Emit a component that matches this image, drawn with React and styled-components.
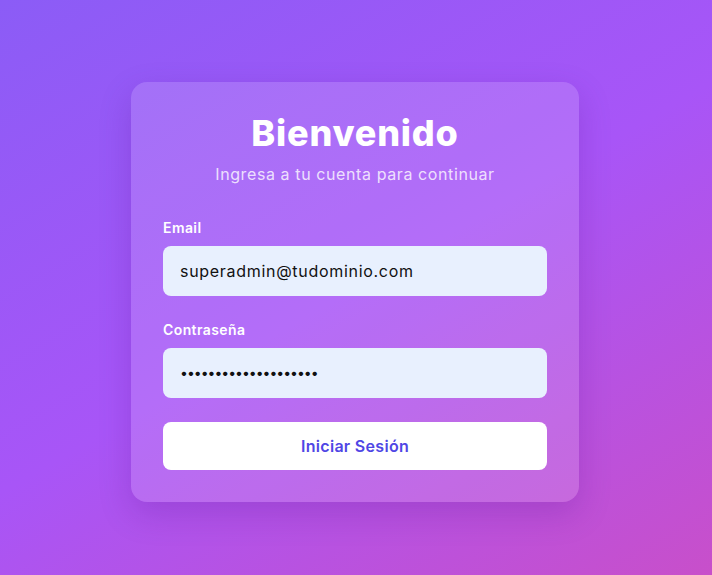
import React from 'react';
import styled, { createGlobalStyle } from 'styled-components';

const GlobalStyle = createGlobalStyle`
    * { box-sizing: border-box; }
    html, body, #root { margin: 0; height: 100%; }
    body {
        font-family: "Inter", "Noto Sans", sans-serif;
    }
`;

const Page = styled.div`
    min-height: 100%;
    padding-top: 8px;
    display: flex;
    align-items: center;
    justify-content: center;
    background: linear-gradient(150deg, #8b5cf6 0%, #a855f7 50%, #c84fca 100%);
`;

const Card = styled.form`
    width: 448px;
    margin-left: -2px;
    padding: 31px 32px 32px;
    border-radius: 16px;
    background: rgba(255, 255, 255, 0.14);
    box-shadow: 0 12px 32px rgba(80, 20, 140, 0.22);
    display: flex;
    flex-direction: column;
`;

const Title = styled.h1`
    margin: 0;
    text-align: center;
    color: #fff;
    font-size: 36px;
    font-weight: 800;
    line-height: 40px;
    letter-spacing: 0.8px;
`;

const Subtitle = styled.p`
    margin: 9px 0 32px;
    text-align: center;
    color: rgba(255, 255, 255, 0.8);
    font-size: 16px;
    line-height: 24px;
    letter-spacing: 0.6px;
`;

const Field = styled.div`
    display: flex;
    flex-direction: column;
    gap: 8px;
    margin-bottom: 24px;
`;

const Label = styled.label`
    color: #fff;
    font-size: 14px;
    font-weight: 600;
    line-height: 20px;
    letter-spacing: 0.4px;
`;

const Input = styled.input`
    height: 50px;
    border: none;
    border-radius: 8px;
    padding: 0 17px;
    background: #e8f0fe;
    color: #111;
    font-family: inherit;
    font-size: ${p => (p.$secret ? '14px' : '16px')};
    letter-spacing: ${p => (p.$secret ? '-1px' : '0.7px')};
    outline: none;
`;

const Button = styled.button`
    height: 48px;
    border: none;
    border-radius: 8px;
    background: #fff;
    color: #4f46e5;
    font-family: inherit;
    font-size: 16px;
    font-weight: 600;
    letter-spacing: 0.3px;
    cursor: pointer;
`;

export default function App() {
    return (
        <>
            <GlobalStyle />
            <Page>
                <Card onSubmit={e => e.preventDefault()}>
                    <Title>Bienvenido</Title>
                    <Subtitle>Ingresa a tu cuenta para continuar</Subtitle>
                    <Field>
                        <Label htmlFor="email">Email</Label>
                        <Input id="email" type="email" defaultValue="superadmin@tudominio.com" />
                    </Field>
                    <Field>
                        <Label htmlFor="password">Contraseña</Label>
                        <Input id="password" type="password" $secret defaultValue="12345678901234567890" />
                    </Field>
                    <Button type="submit">Iniciar Sesión</Button>
                </Card>
            </Page>
        </>
    );
}
